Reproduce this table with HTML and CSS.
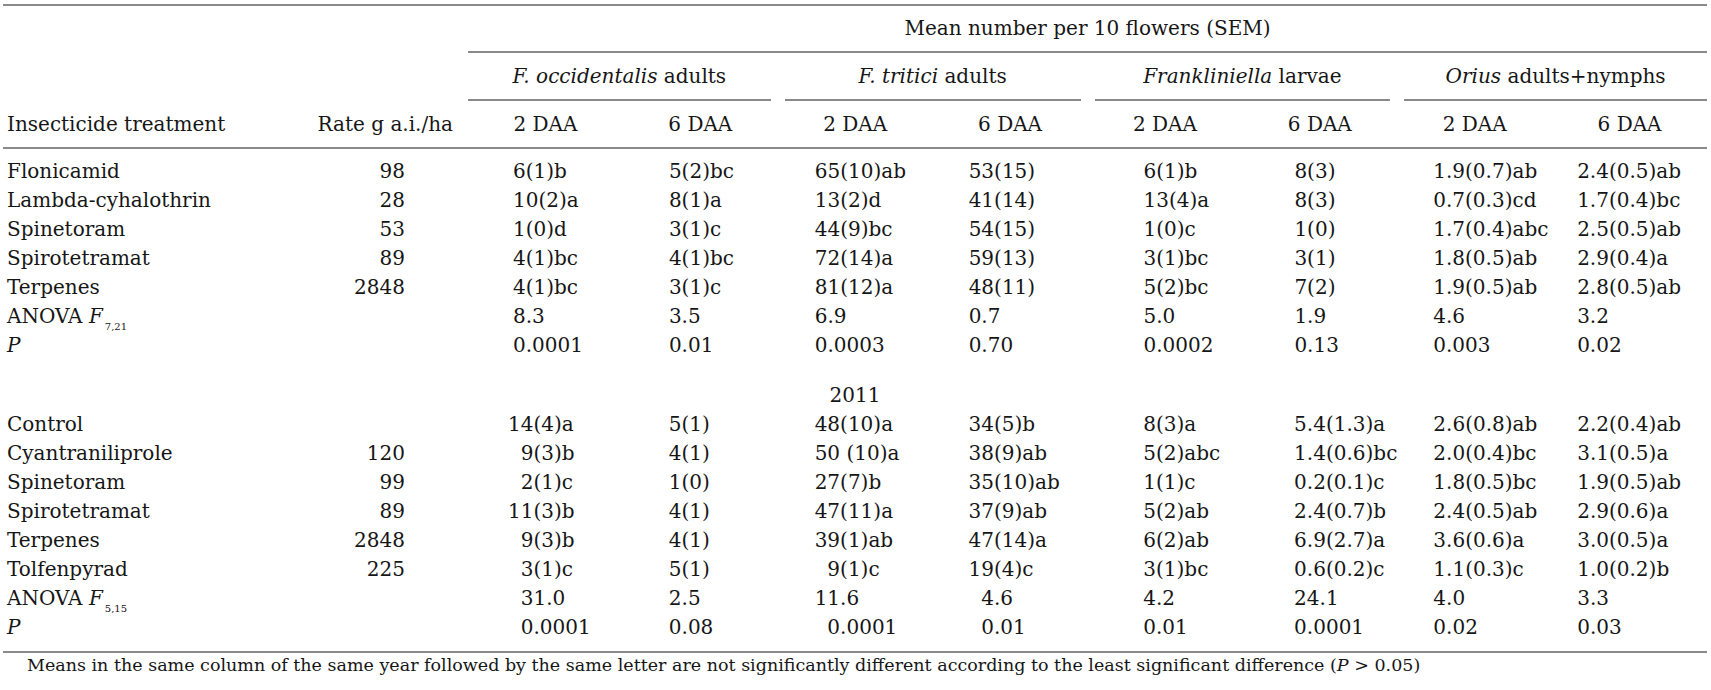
FILE: index.html
```html
<!DOCTYPE html>
<html>
<head>
<meta charset="utf-8">
<link rel="stylesheet" href="styles.css">
</head>
<body>
<div class="table">
  <div class="grid head">
    <div class="blank"></div>
    <div class="mean">Mean number per 10 flowers (SEM)</div>

    <div class="blank"></div>
    <div class="grp g-first"><i>F. occidentalis</i> adults</div>
    <div class="grp"><i>F. tritici</i> adults</div>
    <div class="grp"><i>Frankliniella</i> larvae</div>
    <div class="grp g-last"><i>Orius</i> adults+nymphs</div>

    <div class="hc name">Insecticide treatment</div>
    <div class="hc rate-h">Rate g a.i./ha</div>
    <div class="hc day">2 DAA</div><div class="hc day">6 DAA</div>
    <div class="hc day">2 DAA</div><div class="hc day">6 DAA</div>
    <div class="hc day">2 DAA</div><div class="hc day">6 DAA</div>
    <div class="hc day">2 DAA</div><div class="hc day">6 DAA</div>
  </div>

  <div class="grid body first-body">
    <div class="name">Flonicamid</div><div class="rate">98</div>
    <div class="v2">6(1)b</div><div class="v3">5(2)bc</div><div class="v4">65(10)ab</div><div class="v5">53(15)</div><div class="v6">6(1)b</div><div class="v7">8(3)</div><div class="v8">1.9(0.7)ab</div><div class="v9">2.4(0.5)ab</div>

    <div class="name">Lambda-cyhalothrin</div><div class="rate">28</div>
    <div class="v2">10(2)a</div><div class="v3">8(1)a</div><div class="v4">13(2)d</div><div class="v5">41(14)</div><div class="v6">13(4)a</div><div class="v7">8(3)</div><div class="v8">0.7(0.3)cd</div><div class="v9">1.7(0.4)bc</div>

    <div class="name">Spinetoram</div><div class="rate">53</div>
    <div class="v2">1(0)d</div><div class="v3">3(1)c</div><div class="v4">44(9)bc</div><div class="v5">54(15)</div><div class="v6">1(0)c</div><div class="v7">1(0)</div><div class="v8">1.7(0.4)abc</div><div class="v9">2.5(0.5)ab</div>

    <div class="name">Spirotetramat</div><div class="rate">89</div>
    <div class="v2">4(1)bc</div><div class="v3">4(1)bc</div><div class="v4">72(14)a</div><div class="v5">59(13)</div><div class="v6">3(1)bc</div><div class="v7">3(1)</div><div class="v8">1.8(0.5)ab</div><div class="v9">2.9(0.4)a</div>

    <div class="name">Terpenes</div><div class="rate">2848</div>
    <div class="v2">4(1)bc</div><div class="v3">3(1)c</div><div class="v4">81(12)a</div><div class="v5">48(11)</div><div class="v6">5(2)bc</div><div class="v7">7(2)</div><div class="v8">1.9(0.5)ab</div><div class="v9">2.8(0.5)ab</div>

    <div class="name">ANOVA <i>F</i><sub>7,21</sub></div><div class="rate"></div>
    <div class="v2">8.3</div><div class="v3">3.5</div><div class="v4">6.9</div><div class="v5">0.7</div><div class="v6">5.0</div><div class="v7">1.9</div><div class="v8">4.6</div><div class="v9">3.2</div>

    <div class="name"><i>P</i></div><div class="rate"></div>
    <div class="v2">0.0001</div><div class="v3">0.01</div><div class="v4">0.0003</div><div class="v5">0.70</div><div class="v6">0.0002</div><div class="v7">0.13</div><div class="v8">0.003</div><div class="v9">0.02</div>
  </div>

  <div class="year">2011</div>

  <div class="grid body last-body">
    <div class="name">Control</div><div class="rate"></div>
    <div class="v2 s2">14(4)a</div><div class="v3">5(1)</div><div class="v4">48(10)a</div><div class="v5">34(5)b</div><div class="v6">8(3)a</div><div class="v7">5.4(1.3)a</div><div class="v8">2.6(0.8)ab</div><div class="v9">2.2(0.4)ab</div>

    <div class="name">Cyantraniliprole</div><div class="rate">120</div>
    <div class="v2 s2">&#8199;9(3)b</div><div class="v3">4(1)</div><div class="v4">50 (10)a</div><div class="v5">38(9)ab</div><div class="v6">5(2)abc</div><div class="v7">1.4(0.6)bc</div><div class="v8">2.0(0.4)bc</div><div class="v9">3.1(0.5)a</div>

    <div class="name">Spinetoram</div><div class="rate">99</div>
    <div class="v2 s2">&#8199;2(1)c</div><div class="v3">1(0)</div><div class="v4">27(7)b</div><div class="v5">35(10)ab</div><div class="v6">1(1)c</div><div class="v7">0.2(0.1)c</div><div class="v8">1.8(0.5)bc</div><div class="v9">1.9(0.5)ab</div>

    <div class="name">Spirotetramat</div><div class="rate">89</div>
    <div class="v2 s2">11(3)b</div><div class="v3">4(1)</div><div class="v4">47(11)a</div><div class="v5">37(9)ab</div><div class="v6">5(2)ab</div><div class="v7">2.4(0.7)b</div><div class="v8">2.4(0.5)ab</div><div class="v9">2.9(0.6)a</div>

    <div class="name">Terpenes</div><div class="rate">2848</div>
    <div class="v2 s2">&#8199;9(3)b</div><div class="v3">4(1)</div><div class="v4">39(1)ab</div><div class="v5">47(14)a</div><div class="v6">6(2)ab</div><div class="v7">6.9(2.7)a</div><div class="v8">3.6(0.6)a</div><div class="v9">3.0(0.5)a</div>

    <div class="name">Tolfenpyrad</div><div class="rate">225</div>
    <div class="v2 s2">&#8199;3(1)c</div><div class="v3">5(1)</div><div class="v4">&#8199;9(1)c</div><div class="v5">19(4)c</div><div class="v6">3(1)bc</div><div class="v7">0.6(0.2)c</div><div class="v8">1.1(0.3)c</div><div class="v9">1.0(0.2)b</div>

    <div class="name">ANOVA <i>F</i><sub>5,15</sub></div><div class="rate"></div>
    <div class="v2 s2">&#8199;31.0</div><div class="v3">2.5</div><div class="v4">11.6</div><div class="v5">&#8199;4.6</div><div class="v6">4.2</div><div class="v7">24.1</div><div class="v8">4.0</div><div class="v9">3.3</div>

    <div class="name"><i>P</i></div><div class="rate"></div>
    <div class="v2 s2">&#8199;0.0001</div><div class="v3">0.08</div><div class="v4">&#8199;0.0001</div><div class="v5">&#8199;0.01</div><div class="v6">0.01</div><div class="v7">0.0001</div><div class="v8">0.02</div><div class="v9">0.03</div>
  </div>
</div>
<p class="note">Means in the same column of the same year followed by the same letter are not significantly different according to the least significant difference (<i>P</i> &gt; 0.05)</p>
</body>
</html>
```

FILE: styles.css
```css
html, body {
  margin: 0;
  padding: 0;
  background: #ffffff;
}

body {
  font-family: "DejaVu Serif", "Liberation Serif", serif;
  color: #161616;
  font-size: 20px;
}

.table {
  width: 1704px;
  margin: 4px 0 0 3px;
  border-top: 2px solid #8a8a8a;
}

.grid {
  display: grid;
  grid-template-columns: 285px 180px repeat(8, 1fr);
}

.blank {
  grid-column: span 2;
}

.mean {
  grid-column: span 8;
  text-align: center;
  line-height: 45px;
  border-bottom: 2px solid #8a8a8a;
}

.grp {
  grid-column: span 2;
  text-align: center;
  line-height: 46px;
  border-bottom: 2px solid #8a8a8a;
  margin: 0 7px;
}

.g-first {
  margin-left: 0;
}

.g-last {
  margin-right: 0;
}

.hc {
  line-height: 46px;
  border-bottom: 2px solid #8a8a8a;
  white-space: nowrap;
}

.day {
  text-align: center;
}

.rate-h {
  text-align: right;
  padding-right: 15px;
}

.body > div {
  line-height: 29px;
  white-space: nowrap;
}

.first-body {
  padding-top: 8px;
}

.last-body {
  padding-bottom: 9px;
  border-bottom: 2px solid #8a8a8a;
}

.name {
  padding-left: 4px;
}

.rate {
  text-align: right;
  padding-right: 63px;
}

.v2 { padding-left: 45px; }
.v3 { padding-left: 46px; }
.v4 { padding-left: 37px; }
.v5 { padding-left: 36px; }
.v6 { padding-left: 56px; }
.v7 { padding-left: 52px; }
.v8 { padding-left: 36px; }
.v9 { padding-left: 25px; }

.body > .s2 {
  padding-left: 40px;
}

sub {
  font-size: 10px;
  line-height: 0;
  vertical-align: -7px;
  margin-left: 2px;
}

.year {
  text-align: center;
  line-height: 29px;
  padding-top: 21px;
}

.note {
  margin: 2px 0 0 27px;
  font-size: 17.5px;
  line-height: 21px;
}
```
